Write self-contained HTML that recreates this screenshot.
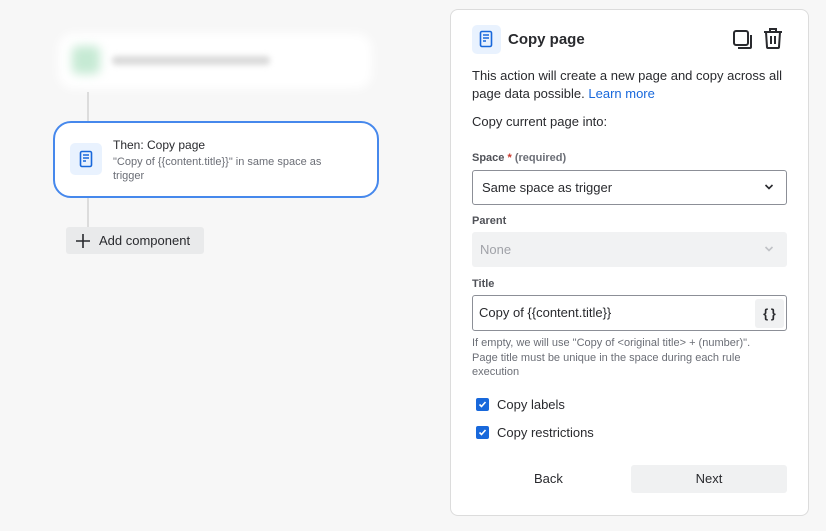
<!DOCTYPE html>
<html><head><style>
*{box-sizing:border-box;margin:0;padding:0}
body{width:826px;height:531px;background:#f7f7f7;font-family:"Liberation Sans",sans-serif;color:#172b4d;position:relative;overflow:hidden}
.a{position:absolute}
.t13{font-size:13px;color:#292a2e}
.lbl{font-size:11px;font-weight:bold;color:#505258}
.sel{border:1px solid #8c8f97;border-radius:3px;background:#fff}
.cb{width:13px;height:13px;background:#1868db;border-radius:2px}
</style></head><body>
<div class="a" style="left:58px;top:33px;width:314px;height:56px;background:#fff;border-radius:16px;filter:blur(5px)"></div>
<div class="a" style="left:72px;top:46px;width:28px;height:28px;background:#c6ead4;border-radius:6px;filter:blur(5px)"></div>
<div class="a" style="left:112px;top:56px;width:158px;height:9px;background:#dadada;border-radius:4px;filter:blur(3px)"></div>
<div class="a" style="left:87px;top:92px;width:2px;height:30px;background:#dcdcdc"></div>
<div class="a" style="left:87px;top:197px;width:2px;height:30px;background:#dcdcdc"></div>
<div class="a" style="left:53px;top:121px;width:326px;height:77px;background:#fff;border:2px solid #4688ec;border-radius:18px"></div>
<div class="a" style="left:70px;top:143px;width:32px;height:32px;background:#e9f2fe;border-radius:5px"></div>
<svg class="a" style="left:78px;top:150px" width="16" height="18" viewBox="0 0 16 18"><rect x="2.5" y="1.5" width="11" height="15" rx="1.5" fill="none" stroke="#1868db" stroke-width="1.6"/><path d="M5 5h6M5 8h6M5 11h3" stroke="#1868db" stroke-width="1.4"/></svg>
<div class="a t13" style="left:113px;top:138px;font-size:12px">Then: Copy page</div>
<div class="a" style="left:113px;top:155px;font-size:11px;color:#6b6e76;line-height:14px;width:235px">"Copy of {{content.title}}" in same space as trigger</div>
<div class="a" style="left:66px;top:227px;width:138px;height:27px;background:#e9eaeb;border-radius:3px"></div>
<svg class="a" style="left:75px;top:233px" width="16" height="16"><path d="M8 1v14M1 8h14" stroke="#292a2e" stroke-width="1.6"/></svg>
<div class="a t13" style="left:99px;top:233px">Add component</div>

<div class="a" style="left:450px;top:9px;width:359px;height:507px;background:#fff;border:1px solid #dcdcdc;border-radius:8px"></div>
<div class="a" style="left:472px;top:25px;width:29px;height:29px;background:#e9f2fe;border-radius:5px"></div>
<svg class="a" style="left:478px;top:30px" width="16" height="18" viewBox="0 0 16 18"><rect x="2.5" y="1.5" width="11" height="15" rx="1.5" fill="none" stroke="#1868db" stroke-width="1.6"/><path d="M5 5h6M5 8h6M5 11h3" stroke="#1868db" stroke-width="1.4"/></svg>
<div class="a" style="left:508px;top:31px;font-size:15px;font-weight:bold;color:#292a2e">Copy page</div>
<svg class="a" style="left:732px;top:29px" width="22" height="22"><rect x="2" y="2" width="14" height="14" rx="2" fill="none" stroke="#292a2e" stroke-width="2"/><path d="M19 6v12a1 1 0 0 1-1 1H6" fill="none" stroke="#292a2e" stroke-width="2"/></svg>
<svg class="a" style="left:762px;top:27px" width="22" height="24"><path d="M2 5h18M8 5V2h6v3M4 5l1 15a1 1 0 0 0 1 1h10a1 1 0 0 0 1-1l1-15M9 9v8M13 9v8" fill="none" stroke="#292a2e" stroke-width="2"/></svg>
<div class="a t13" style="left:472px;top:67px;line-height:18px;width:320px">This action will create a new page and copy across all page data possible. <span style="color:#1868db">Learn more</span></div>
<div class="a t13" style="left:472px;top:114px">Copy current page into:</div>
<div class="a lbl" style="left:472px;top:152px">Space <span style="color:#c9372c">*</span> <span style="font-weight:bold;color:#6b6e76">(required)</span></div>
<div class="a sel" style="left:472px;top:170px;width:315px;height:35px"></div>
<div class="a t13" style="left:482px;top:180px">Same space as trigger</div>
<svg class="a" style="left:764px;top:183px" width="10" height="8"><path d="M1.5 2l3.5 3.5L8.5 2" fill="none" stroke="#292a2e" stroke-width="1.6"/></svg>
<div class="a lbl" style="left:472px;top:215px">Parent</div>
<div class="a" style="left:472px;top:232px;width:315px;height:35px;background:#f1f2f3;border-radius:3px"></div>
<div class="a t13" style="left:480px;top:242px;color:#a0a2a8">None</div>
<svg class="a" style="left:764px;top:245px" width="10" height="8"><path d="M1.5 2l3.5 3.5L8.5 2" fill="none" stroke="#c0c2c6" stroke-width="1.6"/></svg>
<div class="a lbl" style="left:472px;top:278px">Title</div>
<div class="a sel" style="left:472px;top:295px;width:315px;height:36px"></div>
<div class="a t13" style="left:479px;top:305px">Copy of {{content.title}}</div>
<div class="a" style="left:755px;top:299px;width:29px;height:29px;background:#f0f1f2;border-radius:3px;font-size:13px;font-weight:bold;text-align:center;line-height:29px;color:#292a2e">{&thinsp;}</div>
<div class="a" style="left:472px;top:336px;font-size:11px;color:#6b6e76;line-height:14.5px;width:298px">If empty, we will use "Copy of &lt;original title&gt; + (number)". Page title must be unique in the space during each rule execution</div>
<div class="a cb" style="left:476px;top:398px"></div>
<svg class="a" style="left:476px;top:398px" width="13" height="13"><path d="M3.5 6.5l2 2 4-4.5" fill="none" stroke="#fff" stroke-width="1.6"/></svg>
<div class="a t13" style="left:497px;top:397px">Copy labels</div>
<div class="a cb" style="left:476px;top:426px"></div>
<svg class="a" style="left:476px;top:426px" width="13" height="13"><path d="M3.5 6.5l2 2 4-4.5" fill="none" stroke="#fff" stroke-width="1.6"/></svg>
<div class="a t13" style="left:497px;top:425px">Copy restrictions</div>
<div class="a t13" style="left:534px;top:471px;font-weight:500">Back</div>
<div class="a" style="left:631px;top:465px;width:156px;height:28px;background:#f0f1f2;border-radius:3px;text-align:center;line-height:28px;font-size:13px;color:#292a2e">Next</div>
</body></html>
